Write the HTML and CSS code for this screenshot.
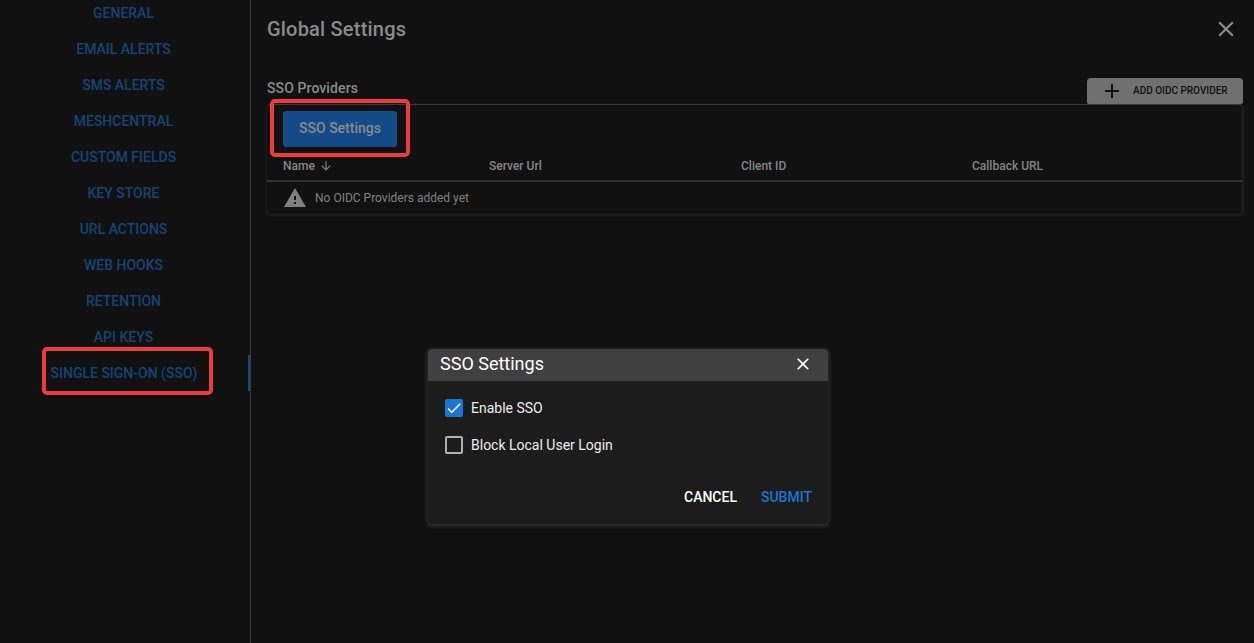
FILE: index.html
```html
<!DOCTYPE html>
<html>
  <head>
    <title>Global Settings</title>
    <link rel="stylesheet" href="styles.css">
  </head>
  <body>
    <nav class="tabs">
      <a class="tab">GENERAL</a>
      <a class="tab">EMAIL ALERTS</a>
      <a class="tab">SMS ALERTS</a>
      <a class="tab">MESHCENTRAL</a>
      <a class="tab">CUSTOM FIELDS</a>
      <a class="tab">KEY STORE</a>
      <a class="tab">URL ACTIONS</a>
      <a class="tab">WEB HOOKS</a>
      <a class="tab">RETENTION</a>
      <a class="tab">API KEYS</a>
      <a class="tab tab-active">SINGLE SIGN-ON (SSO)</a>
    </nav>

    <main class="panel">
      <header class="panel-head">
        <h1>Global Settings</h1>
        <svg class="panel-close" viewBox="0 0 24 24"><path d="M19 6.41 17.59 5 12 10.59 6.41 5 5 6.41 10.59 12 5 17.59 6.41 19 12 13.41 17.59 19 19 17.59 13.41 12z"/></svg>
      </header>

      <div class="section-head">
        <h2>SSO Providers</h2>
        <button class="add-btn">
          <svg viewBox="0 0 24 24"><path d="M19 13h-6v6h-2v-6H5v-2h6V5h2v6h6v2z"/></svg>
          <span>ADD OIDC PROVIDER</span>
        </button>
      </div>

      <section class="table-card">
        <div class="table-top">
          <button class="sso-btn">SSO Settings</button>
        </div>
        <div class="table-row table-header">
          <span class="col-name">Name <svg class="sort" viewBox="0 0 24 24"><path d="M20 12l-1.41-1.41L13 16.17V4h-2v12.17l-5.58-5.59L4 12l8 8 8-8z"/></svg></span>
          <span class="col-url">Server Url</span>
          <span class="col-client">Client ID</span>
          <span>Callback URL</span>
        </div>
        <div class="empty-row">
          <svg viewBox="0 0 24 24"><path d="M1 21h22L12 2 1 21zm12-3h-2v-2h2v2zm0-4h-2v-4h2v4z"/></svg>
          <span>No OIDC Providers added yet</span>
        </div>
      </section>
    </main>

    <div class="mark mark-tab"></div>
    <div class="mark mark-btn"></div>

    <div class="dialog">
      <div class="dialog-head">
        <span>SSO Settings</span>
        <svg viewBox="0 0 24 24"><path d="M19 6.41 17.59 5 12 10.59 6.41 5 5 6.41 10.59 12 5 17.59 6.41 19 12 13.41 17.59 19 19 17.59 13.41 12z"/></svg>
      </div>
      <div class="dialog-body">
        <label class="check-row">
          <span class="box box-on">
            <svg viewBox="0 0 24 24"><path d="M9 16.17 4.83 12l-1.42 1.41L9 19 21 7l-1.41-1.41z"/></svg>
          </span>
          Enable SSO
        </label>
        <label class="check-row">
          <span class="box"></span>
          Block Local User Login
        </label>
      </div>
      <div class="dialog-actions">
        <a class="action">CANCEL</a>
        <a class="action action-primary">SUBMIT</a>
      </div>
    </div>
  </body>
</html>
```

FILE: styles.css
```css
* {
  box-sizing: border-box;
}

html,
body {
  height: 100%;
  margin: 0;
  overflow: hidden;
}

body {
  background: #111111;
  display: flex;
  font-family: Roboto, sans-serif;
  position: relative;
}

.tabs {
  border-right: 1px solid #3a3a3a;
  display: flex;
  flex-direction: column;
  flex-shrink: 0;
  height: 100%;
  width: 251px;
}

.tabs .tab:first-child {
  margin-top: -5px;
}

.tab {
  align-items: center;
  color: #134478;
  display: flex;
  font-size: 14px;
  font-weight: 500;
  height: 36px;
  justify-content: center;
  margin-right: -1px;
  padding-right: 4px;
}

.tab-active {
  border-right: 2px solid #134a87;
  margin-right: 0;
  padding-right: 0;
}

.panel {
  flex: 1;
  padding: 0 11px 0 16px;
}

.panel-head {
  align-items: center;
  display: flex;
  height: 58px;
  justify-content: space-between;
}

.panel-head h1 {
  color: #8a8a8a;
  font-size: 20px;
  font-weight: 500;
  letter-spacing: 0.2px;
  margin: 0;
}

.panel-close {
  fill: #8a8a8a;
  height: 26px;
  margin-right: 4px;
  width: 26px;
}

.section-head {
  align-items: flex-end;
  display: flex;
  height: 46px;
  justify-content: space-between;
}

.section-head h2 {
  color: #8a8a8a;
  font-size: 14px;
  font-weight: 500;
  letter-spacing: 0.1px;
  line-height: 20px;
  margin: 0 0 6px;
}

.add-btn {
  align-items: center;
  background: #707070;
  border: 0;
  border-radius: 4px 4px 2px 2px;
  color: #111111;
  display: flex;
  font-family: inherit;
  font-size: 10px;
  font-weight: 500;
  height: 26px;
  padding: 0 0 1px 13px;
  white-space: nowrap;
  width: 156px;
}

.add-btn svg {
  fill: #111111;
  flex-shrink: 0;
  height: 24px;
  margin-right: 9px;
  width: 24px;
}

.table-card {
  border-radius: 4px;
  border-right: 1px solid #262626;
  border-top: 1px solid #3a3a3a;
  box-shadow: 0 1px 3px rgba(90, 90, 90, 0.35);
  height: 110px;
}

.table-top {
  height: 49px;
  padding: 6px 16px 0;
}

.sso-btn {
  background: #134a87;
  border: 0;
  border-radius: 3px;
  color: #8a8a8a;
  font-family: inherit;
  font-size: 14px;
  font-weight: 500;
  height: 36px;
  padding: 0 0 2px;
  width: 114px;
}

.table-row {
  align-items: center;
  border-bottom: 2px solid #333333;
  color: #858585;
  display: flex;
  font-size: 12px;
  font-weight: 500;
  height: 28px;
  padding: 0 16px 2px;
}

.col-name {
  align-items: center;
  display: flex;
  width: 206px;
}

.sort {
  fill: #858585;
  height: 14px;
  margin-left: 4px;
  width: 14px;
}

.col-url {
  width: 252px;
}

.col-client {
  width: 231px;
}

.empty-row {
  align-items: center;
  color: #808080;
  display: flex;
  font-size: 12px;
  height: 32px;
  padding-left: 16px;
}

.empty-row svg {
  fill: #808080;
  height: 24px;
  margin-right: 8px;
  width: 24px;
}

/* red annotation frames and the dialog sit on top of the page */
.mark {
  border: 4px solid #ee3b3b;
  border-radius: 5px;
  position: absolute;
}

.mark-tab {
  height: 48px;
  left: 42px;
  top: 347px;
  width: 171px;
}

.mark-btn {
  height: 58px;
  left: 270px;
  top: 99px;
  width: 140px;
}

.dialog {
  background: #1c1c1c;
  border-radius: 4px;
  box-shadow: 0 1px 5px rgba(130, 130, 130, 0.45);
  height: 175px;
  left: 428px;
  position: absolute;
  top: 349px;
  width: 400px;
}

.dialog-head {
  align-items: center;
  background: #404040;
  border-radius: 4px 4px 0 0;
  color: #ffffff;
  display: flex;
  font-size: 18px;
  height: 32px;
  justify-content: space-between;
  padding: 0 15px 3px 12px;
}

.dialog-head svg {
  fill: #ffffff;
  height: 20px;
  width: 20px;
}

.dialog-body {
  display: flex;
  flex-direction: column;
  gap: 19px;
  padding: 18px 17px 0;
}

.check-row {
  align-items: center;
  color: #ededed;
  display: flex;
  font-size: 14px;
  gap: 8px;
  height: 18px;
}

.box {
  border: 2px solid #b0b0b0;
  border-radius: 2px;
  display: block;
  height: 18px;
  width: 18px;
}

.box-on {
  background: #1976d2;
  border: 0;
}

.box-on svg {
  display: block;
  fill: #ffffff;
  height: 18px;
  width: 18px;
}

.dialog-actions {
  display: flex;
  gap: 24px;
  justify-content: flex-end;
  margin-top: 33px;
  padding-right: 16px;
}

.action {
  color: #ffffff;
  font-size: 14px;
  font-weight: 500;
  line-height: 20px;
}

.action-primary {
  color: #1976d2;
}
```
